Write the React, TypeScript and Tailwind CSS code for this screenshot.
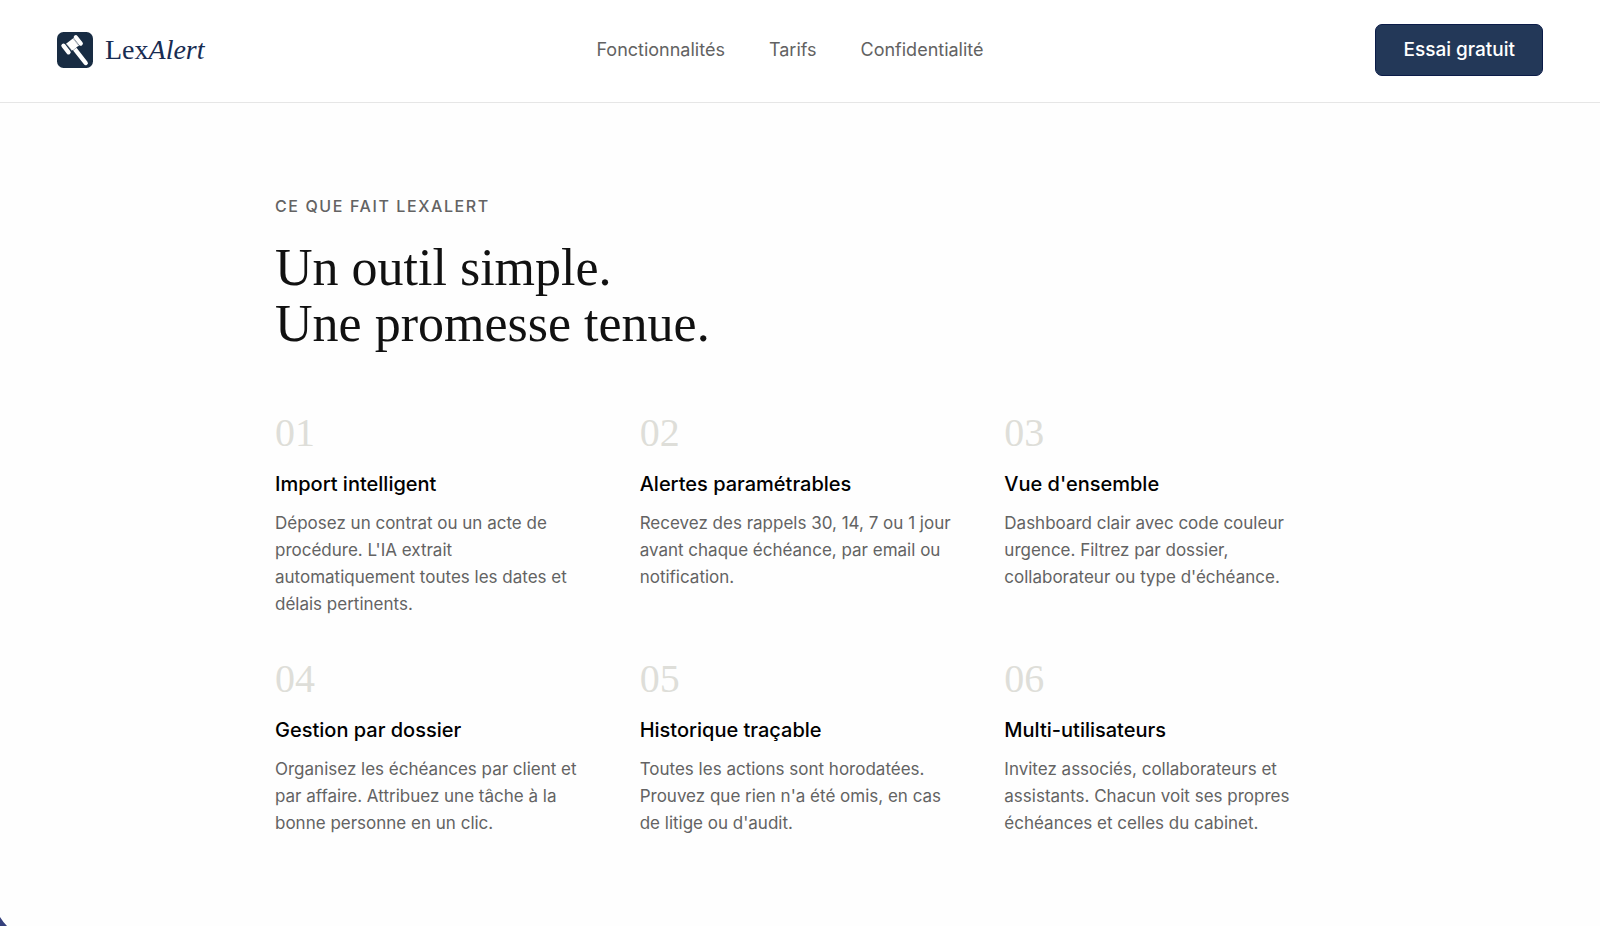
type Feature = { number: string; title: string; text: string };

const links = [
  { label: "Fonctionnalités", href: "#fonctionnalites" },
  { label: "Tarifs", href: "#tarifs" },
  { label: "Confidentialité", href: "#confidentialite" },
];

const features: Feature[] = [
  {
    number: "01",
    title: "Import intelligent",
    text: "Déposez un contrat ou un acte de procédure. L'IA extrait automatiquement toutes les dates et délais pertinents.",
  },
  {
    number: "02",
    title: "Alertes paramétrables",
    text: "Recevez des rappels 30, 14, 7 ou 1 jour avant chaque échéance, par email ou notification.",
  },
  {
    number: "03",
    title: "Vue d'ensemble",
    text: "Dashboard clair avec code couleur urgence. Filtrez par dossier, collaborateur ou type d'échéance.",
  },
  {
    number: "04",
    title: "Gestion par dossier",
    text: "Organisez les échéances par client et par affaire. Attribuez une tâche à la bonne personne en un clic.",
  },
  {
    number: "05",
    title: "Historique traçable",
    text: "Toutes les actions sont horodatées. Prouvez que rien n'a été omis, en cas de litige ou d'audit.",
  },
  {
    number: "06",
    title: "Multi-utilisateurs",
    text: "Invitez associés, collaborateurs et assistants. Chacun voit ses propres échéances et celles du cabinet.",
  },
];

function GavelLogo() {
  return (
    <svg viewBox="0 0 36 36" className="size-9 shrink-0" aria-hidden="true">
      <rect width="36" height="36" rx="6.5" fill="#182c43" />
      <g stroke="#ffffff" strokeLinecap="round" fill="none">
        <path d="M18 17.4 L28.7 31" strokeWidth="4.4" />
        <path d="M6.4 13.6 L11.6 20.4" strokeWidth="4.2" />
        <path d="M18.8 5.2 L23.8 11.6" strokeWidth="4.2" />
      </g>
      <path d="M9 11.8 L16.6 6 L22.2 13.4 L14.8 18.8 Z" fill="#ffffff" />
      <path
        d="M9.4 11.8 L14.6 18.4 M16.2 6.6 L21.6 13.4 M15.4 19 L21.4 14.2"
        stroke="#182c43"
        strokeOpacity="0.55"
        strokeWidth="0.6"
        fill="none"
      />
    </svg>
  );
}

function Header() {
  return (
    <header className="flex items-center justify-between border-b border-[#e6e6e6] bg-white px-[57px] pt-6 pb-[26px]">
      <a href="#" className="flex items-center gap-3">
        <GavelLogo />
        <span className="font-['Liberation_Serif',serif] text-[28px] leading-9 text-[#182c52]">
          Lex<em>Alert</em>
        </span>
      </a>
      <nav className="flex gap-11">
        {links.map((link) => (
          <a key={link.href} href={link.href} className="text-lg leading-7 text-[#626262]">
            {link.label}
          </a>
        ))}
      </nav>
      <button
        type="button"
        className="rounded-[7px] border border-[#0b1c48] bg-[#233858] px-[27px] py-[11px] text-[19px] leading-7 font-medium text-white"
      >
        Essai gratuit
      </button>
    </header>
  );
}

function FeatureItem({ number, title, text }: Feature) {
  return (
    <article>
      <p className="font-['Liberation_Serif',serif] text-[40px] leading-10 text-[#deded9]">{number}</p>
      <h3 className="mt-[17px] text-xl leading-7 font-medium text-black">{title}</h3>
      <p className="mt-3 text-[17px] leading-[27px] text-[#636363]">{text}</p>
    </article>
  );
}

export default function App() {
  return (
    <div className="relative min-h-screen overflow-hidden bg-[#fefefe] font-['Inter',sans-serif]">
      <Header />
      <main className="mx-auto max-w-[1050px] pt-[91px] pb-20">
        <p className="text-base leading-6 font-medium tracking-widest text-[#636363] uppercase">
          Ce que fait LexAlert
        </p>
        <h2 className="mt-[22px] font-['Liberation_Serif',serif] text-[52px] leading-14 text-[#111111]">
          Un outil simple.
          <br />
          Une promesse tenue.
        </h2>
        <div className="mt-[61px] grid grid-cols-3 gap-x-11 gap-y-[41px]">
          {features.map((feature) => (
            <FeatureItem key={feature.number} {...feature} />
          ))}
        </div>
      </main>
      <svg viewBox="0 0 8 10" className="absolute bottom-0 left-0 h-[10px] w-2" aria-hidden="true">
        <path d="M0 1 Q3 6 7 10 H0 Z" fill="#35407c" />
      </svg>
    </div>
  );
}
